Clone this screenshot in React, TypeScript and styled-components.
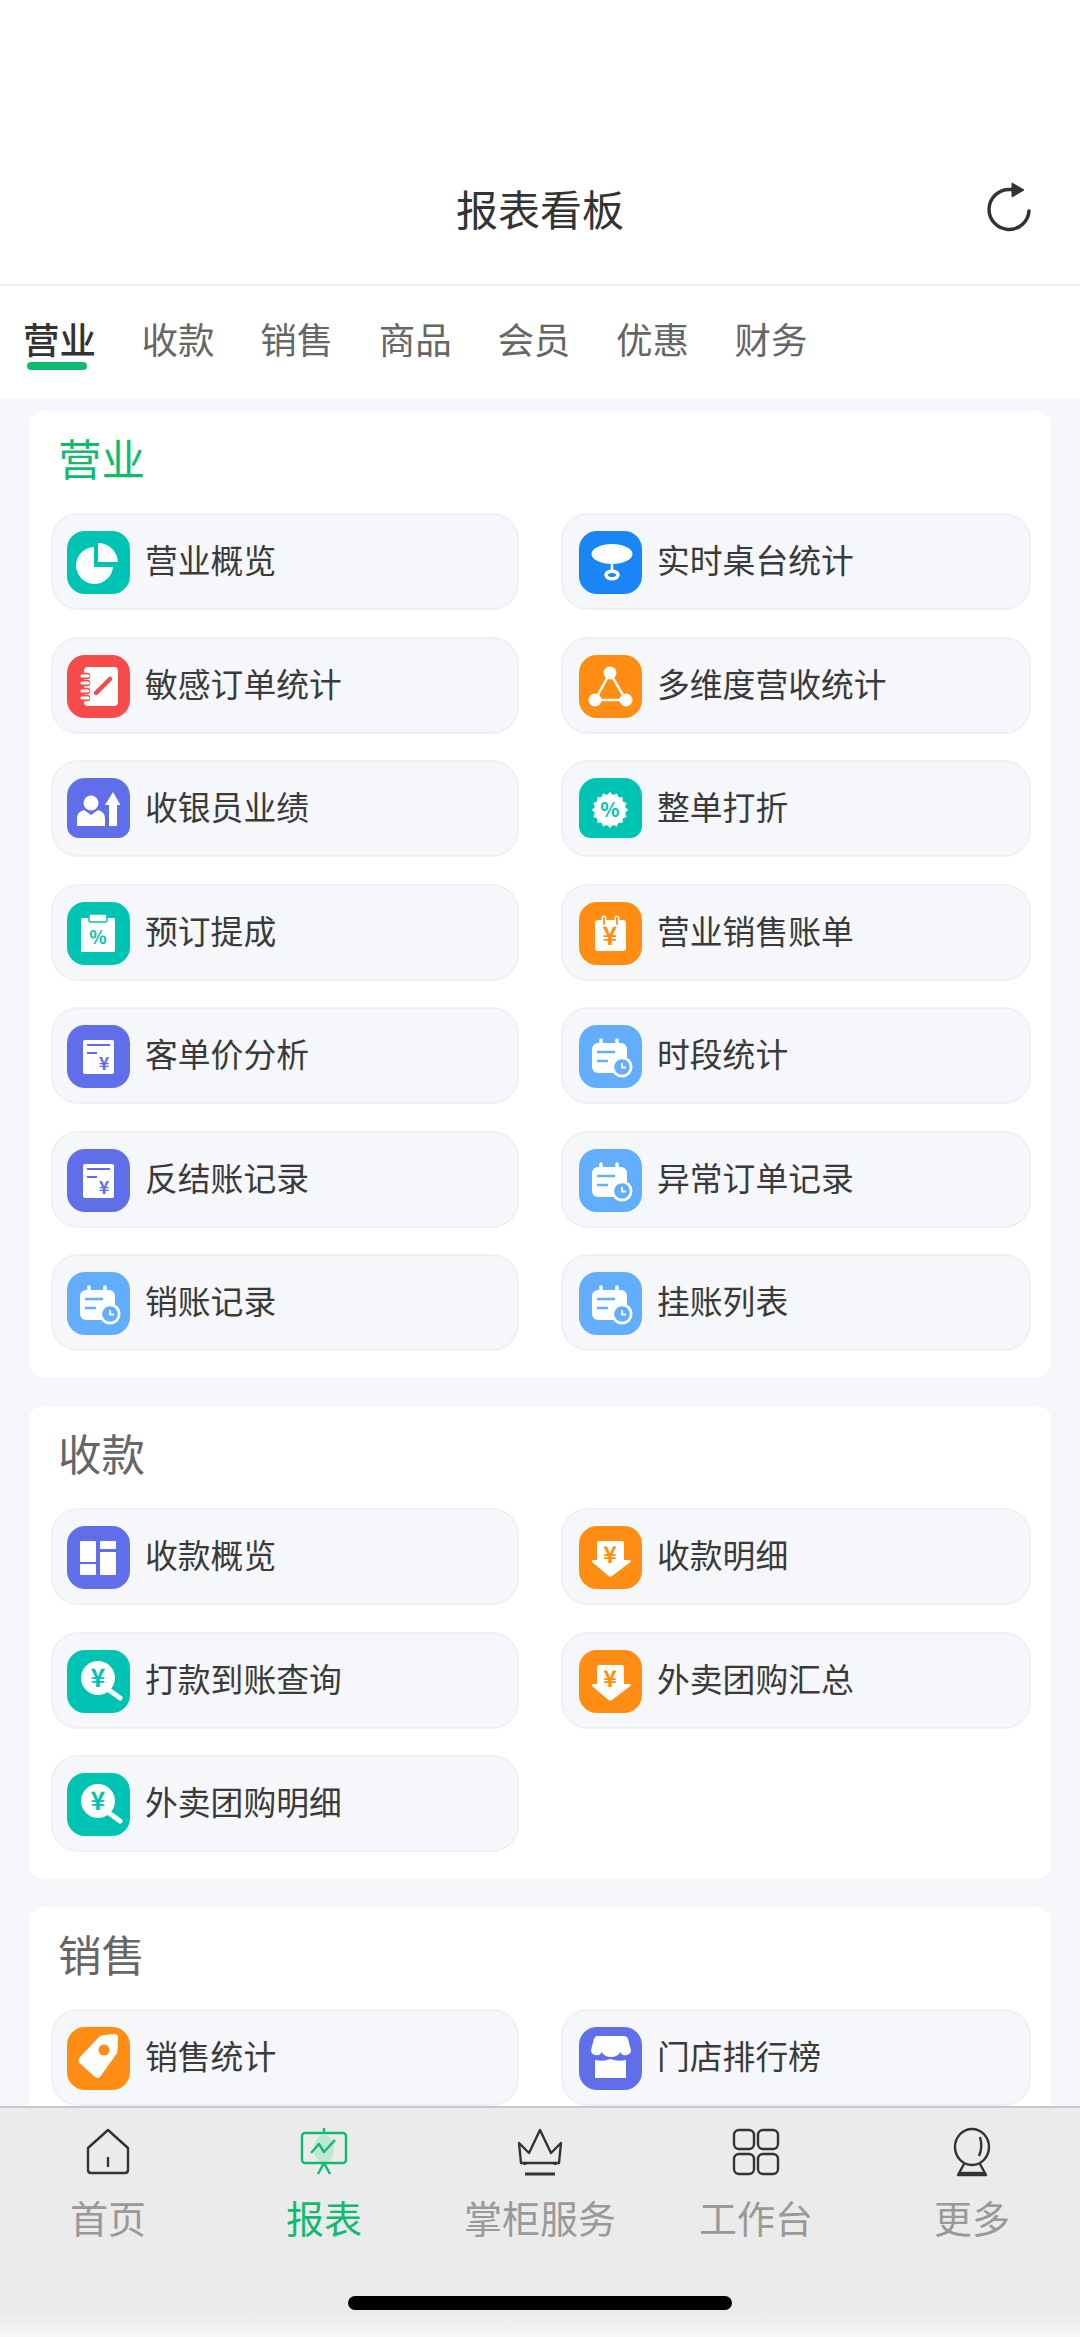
import React from "react";
import styled, { createGlobalStyle } from "styled-components";

const GlobalStyle = createGlobalStyle`
  html, body {
    margin: 0;
    padding: 0;
    background: #fff;
    font-family: "Noto Sans CJK SC", "Noto Sans", sans-serif;
  }
  * { box-sizing: border-box; }
`;

const TEAL = "#00c4b3";
const BLUE = "#1a86f5";
const RED = "#f74a4a";
const ORANGE = "#ff8c13";
const PURPLE = "#616ee9";
const SKY = "#62aefd";
const GREEN = "#10bb6f";

const Page = styled.div`
  width: 1080px;
  height: 2337px;
  display: flex;
  flex-direction: column;
  overflow: hidden;
  background: #f5f7fa;
`;

const Header = styled.header`
  flex: none;
  height: 286px;
  padding: 135px 42px 0;
  display: grid;
  grid-template-columns: 1fr auto 1fr;
  align-items: start;
  background: #fff;
  border-bottom: 2px solid #eeeeee;
`;

const Title = styled.h1`
  grid-column: 2;
  margin: 0;
  font-size: 42px;
  line-height: 145px;
  font-weight: 400;
  color: #333;
`;

const Refresh = styled.svg`
  justify-self: end;
  margin-top: 45px;
`;

const Tabs = styled.nav`
  flex: none;
  height: 112px;
  padding: 24px 0 0 23px;
  display: flex;
  gap: 45.6px;
  background: #fff;
`;

const Tab = styled.div<{ $active?: boolean }>`
  position: relative;
  width: 73px;
  font-size: 36.5px;
  line-height: 58px;
  white-space: nowrap;
  color: ${(p) => (p.$active ? "#333" : "#666")};
  font-weight: ${(p) => (p.$active ? 500 : 400)};

  ${(p) =>
    p.$active &&
    `&::after {
      content: "";
      position: absolute;
      left: 4px;
      right: 9px;
      top: 52px;
      height: 8px;
      border-radius: 4px;
      background: ${GREEN};
    }`}
`;

const Content = styled.main`
  flex: 1;
  min-height: 0;
  overflow: hidden;
  padding: 13px 29px 0 29px;
  display: flex;
  flex-direction: column;
  gap: 29px;
`;

const Card = styled.section`
  flex: none;
  background: #fff;
  border-radius: 14px;
  padding: 0 20px 26px 22px;
`;

const CardTitle = styled.h2<{ $active?: boolean }>`
  margin: 0 0 0 7px;
  height: 102px;
  font-size: 43.5px;
  line-height: 94px;
  font-weight: 400;
  color: ${(p) => (p.$active ? GREEN : "#666")};
`;

const Grid = styled.div`
  display: grid;
  grid-template-columns: 468px 470px;
  column-gap: 42px;
  row-gap: 26.5px;
`;

const Item = styled.div`
  height: 97px;
  padding: 16px 0 0 14px;
  display: flex;
  align-items: flex-start;
  background: #f6f7fa;
  border: 2px solid #eef0f6;
  border-radius: 27px;

  &:nth-child(even) {
    padding-left: 16px;
  }
`;

const IconTile = styled.div<{ $color: string; $cut?: boolean }>`
  flex: none;
  width: 63px;
  height: ${(p) => (p.$cut ? 60 : 63)}px;
  overflow: hidden;
  background: ${(p) => p.$color};
  border-radius: ${(p) => (p.$cut ? "18px 18px 12px 12px" : "18px")};

  svg {
    display: block;
  }
`;

const Label = styled.span`
  margin-left: 15px;
  font-size: 32.8px;
  line-height: 56px;
  color: #3a3a3a;
  white-space: nowrap;
`;

const Glyph = styled.text`
  font-family: "Noto Sans CJK SC", sans-serif;
  font-weight: 700;
  text-anchor: middle;
`;

const TabBar = styled.footer`
  flex: none;
  height: 231px;
  display: flex;
  flex-direction: column;
  align-items: center;
  background: linear-gradient(#ebebeb 90%, #f6f6f6 100%);
  border-top: 2px solid #c6c7cb;
`;

const NavRow = styled.div`
  width: 100%;
  padding-top: 19px;
  display: grid;
  grid-template-columns: repeat(5, 1fr);
`;

const NavItem = styled.div`
  display: flex;
  flex-direction: column;
  align-items: center;
`;

const NavLabel = styled.span<{ $active?: boolean }>`
  margin-top: 13px;
  font-size: 38px;
  line-height: 54px;
  color: ${(p) => (p.$active ? GREEN : "#999")};
  white-space: nowrap;
`;

const HomeIndicator = styled.div`
  margin-top: 52px;
  width: 384px;
  height: 14px;
  border-radius: 7px;
  background: #000;
`;

const Tile: React.FC<{ children: React.ReactNode }> = ({ children }) => (
  <svg width="63" height="63" viewBox="0 0 63 63">
    {children}
  </svg>
);

const PieIcon = () => (
  <Tile>
    <path d="M27 16A18.5 18.5 0 1 0 46 36H27Z" fill="#fff" />
    <path d="M31 12A20 20 0 0 1 51 31H31Z" fill="#fff" />
  </Tile>
);

const TableIcon = () => (
  <Tile>
    <ellipse cx="33" cy="23" rx="20.5" ry="10" fill="#fff" />
    <path d="M33 32v7" stroke="#fff" strokeWidth="2.5" />
    <ellipse cx="33" cy="44" rx="6" ry="3.8" fill="none" stroke="#fff" strokeWidth="3.5" />
  </Tile>
);

const NoteIcon = () => (
  <Tile>
    <rect x="17" y="12" width="34" height="39" rx="4" fill="#fff" />
    <g stroke={RED} strokeWidth="6.5" strokeLinecap="round">
      <path d="M15 21h5M15 28h5M15 36h5M15 43h5" />
    </g>
    <g stroke="#fff" strokeWidth="3.2" strokeLinecap="round">
      <path d="M15 21h6M15 28h6M15 36h6M15 43h6" />
    </g>
    <path d="M29 38L43 24" stroke={RED} strokeWidth="4.5" strokeLinecap="round" />
  </Tile>
);

const TriangleIcon = () => (
  <Tile>
    <path d="M31 18L16 45H47Z" fill="none" stroke="#fff" strokeWidth="2.5" />
    <circle cx="31" cy="18" r="6.5" fill="#fff" />
    <circle cx="16" cy="45" r="6.5" fill="#fff" />
    <circle cx="47" cy="45" r="6.5" fill="#fff" />
  </Tile>
);

const CashierIcon = () => (
  <Tile>
    <circle cx="24" cy="25" r="7.5" fill="#fff" />
    <path d="M10 48V40q0-6 7-8l7 5 7-5q7 2 7 8v8Z" fill="#fff" />
    <path d="M46 14l7.5 13H50v21h-8V27h-4Z" fill="#fff" />
  </Tile>
);

const burst = Array.from({ length: 32 }, (_, i) => {
  const r = i % 2 === 0 ? 18 : 15.4;
  const a = (i * Math.PI) / 16;
  return `${(31 + r * Math.sin(a)).toFixed(1)},${(32 - r * Math.cos(a)).toFixed(1)}`;
}).join(" ");

const BurstIcon = () => (
  <Tile>
    <polygon points={burst} fill="#fff" />
    <Glyph x="31" y="39" fontSize="20" fill={TEAL}>%</Glyph>
  </Tile>
);

const ClipIcon = () => (
  <Tile>
    <rect x="14" y="16" width="34" height="34" rx="1.5" fill="#fff" />
    <rect x="22" y="12" width="18" height="8" rx="1.5" fill="#fff" stroke={TEAL} strokeWidth="1.5" />
    <Glyph x="31" y="42" fontSize="18" fill={TEAL}>%</Glyph>
  </Tile>
);

const CalendarYenIcon = () => (
  <Tile>
    <rect x="16" y="18" width="31" height="31" rx="3" fill="#fff" />
    <path d="M25 16v7M38 16v7" stroke="#fff" strokeWidth="5" strokeLinecap="round" />
    <path d="M25 16v6M38 16v6" stroke={ORANGE} strokeWidth="1.8" strokeLinecap="round" />
    <Glyph x="31" y="43" fontSize="25" fill={ORANGE}>¥</Glyph>
  </Tile>
);

const ReceiptIcon = () => (
  <Tile>
    <rect x="16" y="15" width="31" height="34" rx="2" fill="#fff" />
    <path d="M20 20h23M20 28h10" stroke={PURPLE} strokeWidth="2.2" />
    <Glyph x="37" y="45" fontSize="18" fill={PURPLE}>¥</Glyph>
  </Tile>
);

const CalendarClockIcon = () => (
  <Tile>
    <rect x="13" y="18" width="35" height="30" rx="6" fill="#fff" />
    <path d="M22 15v6M38 15v6" stroke="#fff" strokeWidth="3.5" strokeLinecap="round" />
    <path d="M18 27h18M18 36h11" stroke={SKY} strokeWidth="2.4" />
    <circle cx="43" cy="42" r="10.5" fill="#fff" />
    <circle cx="43" cy="42" r="7.8" fill={SKY} />
    <path d="M43 38v4.5h4" fill="none" stroke="#fff" strokeWidth="1.8" />
  </Tile>
);

const BoardIcon = () => (
  <Tile>
    <rect x="13" y="15" width="16" height="21" rx="1" fill="#fff" />
    <rect x="13" y="38" width="16" height="11" rx="1" fill="#fff" />
    <rect x="33" y="15" width="16" height="8" rx="1" fill="#fff" />
    <rect x="33" y="26" width="16" height="23" rx="1" fill="#fff" />
  </Tile>
);

const SearchYenIcon = () => (
  <Tile>
    <path d="M42 40L53 48" stroke="#fff" strokeWidth="5" strokeLinecap="round" />
    <circle cx="31" cy="28" r="17" fill="#fff" />
    <Glyph x="31" y="37" fontSize="25" fill={TEAL}>¥</Glyph>
  </Tile>
);

const DownYenIcon = () => (
  <Tile>
    <path d="M18 17q0-2 2-2h23q2 0 2 2v17h6q1.500 .5 .5 2L33 50q-1.800 1.300-3.500 0L13 36q-1-1.500 .5-2H18Z" fill="#fff" />
    <Glyph x="31" y="37" fontSize="23" fill={ORANGE}>¥</Glyph>
  </Tile>
);

const TagIcon = () => (
  <Tile>
    <path
      d="M13 30L32 10q1.500-1.500 4-1.800l11-1.200q4-.3 4 4l-.5 13q0 2.500-1.800 4L33 50q-2.500 2-5 0L13 36.500q-3-3 0-6.500Z"
      fill="#fff"
    />
    <circle cx="37" cy="23" r="5.500" fill={ORANGE} />
  </Tile>
);

const StoreIcon = () => (
  <Tile>
    <path
      d="M18 9h27q3 0 4 3l3 11q0 4-4 5-5 1-6.500-3-3 5-9.500 5t-9.500-5Q21 29 16 28q-4-1-4-5l3-11q1-3 3-3Z"
      fill="#fff"
    />
    <path d="M16 33q8 2 15.500-1 8 3 15.500 1v18H16Z" fill="#fff" />
  </Tile>
);

const RefreshIcon = () => (
  <Refresh width="56" height="56" viewBox="0 0 56 56">
    <path
      d="M47 31A20 20 0 1 1 28 9.500H32"
      fill="none"
      stroke="#333"
      strokeWidth="3.4"
      strokeLinecap="round"
    />
    <path d="M30 3L42 10L30 17Z" fill="#333" stroke="#333" strokeWidth="1" strokeLinejoin="round" />
  </Refresh>
);

const NavSvg: React.FC<{ children: React.ReactNode; stroke?: string }> = ({ children, stroke = "#333" }) => (
  <svg width="50" height="50" viewBox="0 0 50 50" fill="none" stroke={stroke} strokeWidth="2.4" strokeLinejoin="round">
    {children}
  </svg>
);

const HomeNav = () => (
  <NavSvg>
    <path d="M25 3L45 21V43q0 3-3 3H8q-3 0-3-3V21Z" />
    <path d="M25 30V40" />
  </NavSvg>
);

const ReportNav = () => (
  <NavSvg stroke={GREEN}>
    <ellipse cx="25" cy="22" rx="10" ry="14" fill="#bfe6d3" stroke="none" />
    <rect x="3" y="6" width="44" height="30" rx="3" />
    <path d="M25 1V6M25 36L19 47M25 36L31 47" />
    <path d="M12 26L20 17L25 25L36 13" />
  </NavSvg>
);

const CrownNav = () => (
  <NavSvg>
    <path d="M6 36L4 16L14 26L25 3L36 26L46 16L44 36Z" />
    <path d="M10 36V38M40 36V38M10 47H40" strokeWidth="3" />
  </NavSvg>
);

const GridNav = () => (
  <NavSvg>
    <rect x="3" y="3" width="20" height="19" rx="5" />
    <rect x="27" y="3" width="20" height="19" rx="5" />
    <rect x="3" y="27" width="20" height="20" rx="5" />
    <rect x="27" y="27" width="20" height="20" rx="5" />
  </NavSvg>
);

const MoreNav = () => (
  <NavSvg>
    <ellipse cx="25" cy="20" rx="17" ry="18" />
    <path d="M33 10q3 10-1 19" />
    <path d="M17 37L11 48H39L33 37" />
    <path d="M12 46H38" />
  </NavSvg>
);

type Entry = { label: string; color: string; Icon: React.FC; cut?: boolean };
type Section = { title: string; active?: boolean; items: Entry[] };

const sections: Section[] = [
  {
    title: "营业",
    active: true,
    items: [
      { label: "营业概览", color: TEAL, Icon: PieIcon },
      { label: "实时桌台统计", color: BLUE, Icon: TableIcon },
      { label: "敏感订单统计", color: RED, Icon: NoteIcon },
      { label: "多维度营收统计", color: ORANGE, Icon: TriangleIcon },
      { label: "收银员业绩", color: PURPLE, Icon: CashierIcon, cut: true },
      { label: "整单打折", color: TEAL, Icon: BurstIcon, cut: true },
      { label: "预订提成", color: TEAL, Icon: ClipIcon },
      { label: "营业销售账单", color: ORANGE, Icon: CalendarYenIcon },
      { label: "客单价分析", color: PURPLE, Icon: ReceiptIcon },
      { label: "时段统计", color: SKY, Icon: CalendarClockIcon },
      { label: "反结账记录", color: PURPLE, Icon: ReceiptIcon },
      { label: "异常订单记录", color: SKY, Icon: CalendarClockIcon },
      { label: "销账记录", color: SKY, Icon: CalendarClockIcon },
      { label: "挂账列表", color: SKY, Icon: CalendarClockIcon },
    ],
  },
  {
    title: "收款",
    items: [
      { label: "收款概览", color: PURPLE, Icon: BoardIcon },
      { label: "收款明细", color: ORANGE, Icon: DownYenIcon },
      { label: "打款到账查询", color: TEAL, Icon: SearchYenIcon },
      { label: "外卖团购汇总", color: ORANGE, Icon: DownYenIcon },
      { label: "外卖团购明细", color: TEAL, Icon: SearchYenIcon },
    ],
  },
  {
    title: "销售",
    items: [
      { label: "销售统计", color: ORANGE, Icon: TagIcon },
      { label: "门店排行榜", color: PURPLE, Icon: StoreIcon },
    ],
  },
];

const tabs = ["营业", "收款", "销售", "商品", "会员", "优惠", "财务"];

const navItems = [
  { label: "首页", Icon: HomeNav },
  { label: "报表", Icon: ReportNav, active: true },
  { label: "掌柜服务", Icon: CrownNav },
  { label: "工作台", Icon: GridNav },
  { label: "更多", Icon: MoreNav },
];

const App: React.FC = () => (
  <Page>
    <GlobalStyle />
    <Header>
      <Title>报表看板</Title>
      <RefreshIcon />
    </Header>
    <Tabs>
      {tabs.map((tab, i) => (
        <Tab key={tab} $active={i === 0}>
          {tab}
        </Tab>
      ))}
    </Tabs>
    <Content>
      {sections.map((section) => (
        <Card key={section.title}>
          <CardTitle $active={section.active}>{section.title}</CardTitle>
          <Grid>
            {section.items.map(({ label, color, Icon, cut }) => (
              <Item key={label}>
                <IconTile $color={color} $cut={cut}>
                  <Icon />
                </IconTile>
                <Label>{label}</Label>
              </Item>
            ))}
          </Grid>
        </Card>
      ))}
    </Content>
    <TabBar>
      <NavRow>
        {navItems.map(({ label, Icon, active }) => (
          <NavItem key={label}>
            <Icon />
            <NavLabel $active={active}>{label}</NavLabel>
          </NavItem>
        ))}
      </NavRow>
      <HomeIndicator />
    </TabBar>
  </Page>
);

export default App;
